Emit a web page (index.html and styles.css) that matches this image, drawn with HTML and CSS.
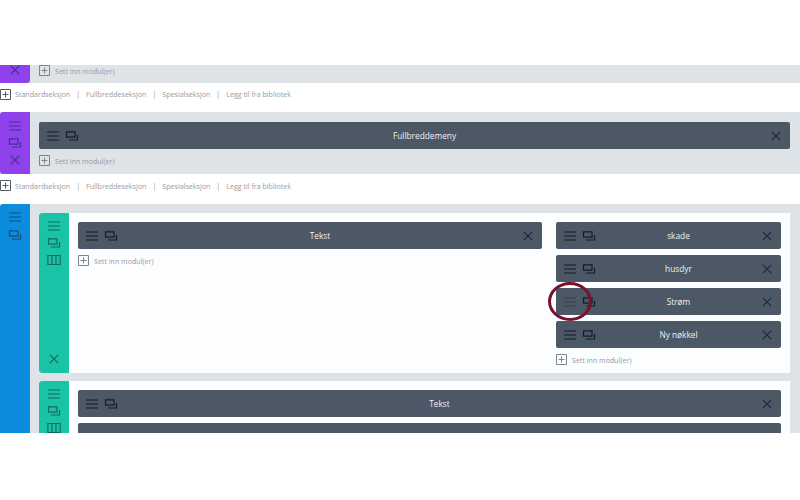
FILE: index.html
```html
<!DOCTYPE html>
<html lang="no">
<head>
<meta charset="utf-8">
<title>Builder</title>
<link rel="stylesheet" href="styles.css">
</head>
<body>
<svg class="defs" width="0" height="0">
  <symbol id="menu" viewBox="0 0 14 10"><path d="M1 1h12M1 5h12M1 9h12" fill="none" stroke="currentColor" stroke-width="1.2"/></symbol>
  <symbol id="copy" viewBox="0 0 14 10"><path d="M1.5 .8h8.5v5.4H1.5zM12.5 4v5H4" fill="none" stroke="currentColor" stroke-width="1.2"/></symbol>
  <symbol id="close" viewBox="0 0 10 10"><path d="M.8 .8l8.4 8.4M9.2 .8L.8 9.2" fill="none" stroke="currentColor" stroke-width="1.2"/></symbol>
  <symbol id="cols" viewBox="0 0 12 9"><path d="M.5 .5h11v8H.5zM4.2 .5v8M7.8 .5v8" fill="none" stroke="currentColor" stroke-width="1"/></symbol>
  <symbol id="plus" viewBox="0 0 11 11"><path d="M.5 .5h10v10H.5z" fill="none" stroke="currentColor" stroke-width="1"/><path d="M5.5 2.5v6M2.5 5.5h6" fill="none" stroke="currentColor" stroke-width="1"/></symbol>
</svg>
<main class="stage">
  <section class="section clipped-top">
    <div class="side purple end"><svg class="ic"><use href="#close"/></svg></div>
    <div class="body"><div class="insert"><svg class="plus"><use href="#plus"/></svg>Sett inn modul(er)</div></div>
  </section>
  <nav class="addrow">
    <svg class="plus"><use href="#plus"/></svg><span>Standardseksjon</span><i>|</i><span>Fullbreddeseksjon</span><i>|</i><span>Spesialseksjon</span><i>|</i><span>Legg til fra bibliotek</span>
  </nav>
  <section class="section wide">
    <div class="side purple">
      <svg class="ic"><use href="#menu"/></svg><svg class="ic"><use href="#copy"/></svg><svg class="ic"><use href="#close"/></svg>
    </div>
    <div class="body pad">
      <div class="module"><svg class="ic"><use href="#menu"/></svg><svg class="ic"><use href="#copy"/></svg><span class="title">Fullbreddemeny</span><svg class="x"><use href="#close"/></svg></div>
      <div class="insert"><svg class="plus"><use href="#plus"/></svg>Sett inn modul(er)</div>
    </div>
  </section>
  <nav class="addrow">
    <svg class="plus"><use href="#plus"/></svg><span>Standardseksjon</span><i>|</i><span>Fullbreddeseksjon</span><i>|</i><span>Spesialseksjon</span><i>|</i><span>Legg til fra bibliotek</span>
  </nav>
  <section class="section regular">
    <div class="side blue">
      <svg class="ic"><use href="#menu"/></svg><svg class="ic"><use href="#copy"/></svg>
    </div>
    <div class="rows">
      <div class="row first">
        <div class="side teal spread">
          <div class="stack"><svg class="ic"><use href="#menu"/></svg><svg class="ic"><use href="#copy"/></svg><svg class="ic"><use href="#cols"/></svg></div>
          <svg class="ic"><use href="#close"/></svg>
        </div>
        <div class="cols">
          <div class="col main">
            <div class="module"><svg class="ic"><use href="#menu"/></svg><svg class="ic"><use href="#copy"/></svg><span class="title">Tekst</span><svg class="x"><use href="#close"/></svg></div>
            <div class="insert"><svg class="plus"><use href="#plus"/></svg>Sett inn modul(er)</div>
          </div>
          <div class="col aside">
            <div class="module"><svg class="ic"><use href="#menu"/></svg><svg class="ic"><use href="#copy"/></svg><span class="title">skade</span><svg class="x"><use href="#close"/></svg></div>
            <div class="module"><svg class="ic"><use href="#menu"/></svg><svg class="ic"><use href="#copy"/></svg><span class="title">husdyr</span><svg class="x"><use href="#close"/></svg></div>
            <div class="module"><svg class="ic faded"><use href="#menu"/></svg><svg class="ic"><use href="#copy"/></svg><span class="title">Strøm</span><svg class="x"><use href="#close"/></svg></div>
            <div class="module"><svg class="ic"><use href="#menu"/></svg><svg class="ic"><use href="#copy"/></svg><span class="title">Ny nøkkel</span><svg class="x"><use href="#close"/></svg></div>
            <div class="insert"><svg class="plus"><use href="#plus"/></svg>Sett inn modul(er)</div>
          </div>
        </div>
      </div>
      <div class="row">
        <div class="side teal">
          <div class="stack"><svg class="ic"><use href="#menu"/></svg><svg class="ic"><use href="#copy"/></svg><svg class="ic"><use href="#cols"/></svg></div>
        </div>
        <div class="cols">
          <div class="col full">
            <div class="module"><svg class="ic"><use href="#menu"/></svg><svg class="ic"><use href="#copy"/></svg><span class="title">Tekst</span><svg class="x"><use href="#close"/></svg></div>
            <div class="module"></div>
          </div>
        </div>
      </div>
    </div>
  </section>
  <div class="ring"></div>
</main>
</body>
</html>
```

FILE: styles.css
```css
* { box-sizing: border-box; }
html, body { margin: 0; padding: 0; background: #fff; }
body { font-family: "Open Sans", sans-serif; height: 500px; overflow: hidden; }
.defs { position: absolute; }
.stage { position: relative; margin-top: 65px; height: 368px; overflow: hidden; }

.section { display: flex; background: #dde3e6; }
.clipped-top { height: 18px; }
.wide { height: 62px; }
.regular { height: 364px; border-radius: 3px 0 0 0; }

.side { width: 30px; flex: none; display: flex; flex-direction: column; align-items: center; color: #4a2a9c; }
.purple { background: #8f42ec; padding-top: 9px; gap: 7px; border-radius: 3px 0 0 3px; }
.purple.end { padding-top: 0; justify-content: flex-end; padding-bottom: 8px; border-radius: 0 0 3px 0; }
.blue { background: #0b8cdc; padding-top: 8px; gap: 8px; color: #12507f; border-radius: 3px 0 0 0; }
.teal { background: #1bc3a6; padding-top: 8px; color: #10695f; border-radius: 3px 0 0 3px; }
.spread { justify-content: space-between; padding-bottom: 9px; }
.stack { display: flex; flex-direction: column; align-items: center; gap: 7px; }

.ic { width: 14px; height: 10px; flex: none; display: block; }
.faded { color: #33404c; }
.x { width: 10px; height: 10px; flex: none; display: block; margin-left: auto; color: #1d2a35; }
.plus { width: 11px; height: 11px; flex: none; color: #7d858c; margin-right: 5px; }

.body { flex: 1; padding-left: 9px; }
.pad { padding: 10px 10px 0 9px; }
.insert { display: flex; align-items: center; height: 11px; font-size: 7.1px; color: #959ca3; white-space: nowrap; }
.clipped-top .insert { margin-top: 0; }
.pad .insert, .main .insert { margin-top: 6px; }

.addrow { height: 29px; display: flex; align-items: center; padding-bottom: 7px; font-size: 7.1px; color: #959ca3; white-space: nowrap; }
.addrow + .wide + .addrow { height: 30px; }
.addrow .plus { margin-right: 4px; color: #555d64; }
.addrow i { font-style: normal; margin: 0 6px; }

.module { position: relative; display: flex; align-items: center; gap: 5px; height: 27px; padding: 0 9px 0 7px; background: #4c5866; border-radius: 2px; color: #141c24; flex: none; }
.title { position: absolute; left: 20px; right: 0; text-align: center; font-size: 8.3px; color: #eef1f3; }

.rows { flex: 1; padding: 9px 10px 0 9px; display: flex; flex-direction: column; gap: 8px; }
.row { display: flex; background: #fbfdff; height: 160px; flex: none; }
.cols { flex: 1; display: flex; padding: 9px 9px 0; gap: 14px; }
.col { display: flex; flex-direction: column; gap: 6px; }
.main { width: 464px; gap: 0; }
.aside { flex: 1; }
.full { flex: 1; }

.ring { position: absolute; left: 548px; top: 217px; width: 44px; height: 39px; border: 3px solid #7a1030; border-radius: 50%; }
```
